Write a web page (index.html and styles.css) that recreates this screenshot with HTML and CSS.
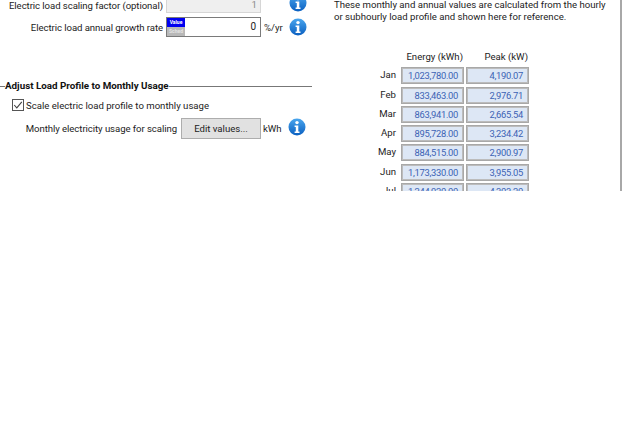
FILE: index.html
```html
<!DOCTYPE html>
<html lang="en">
<head>
<meta charset="utf-8">
<title>Electric Load</title>
<link rel="stylesheet" href="styles.css">
</head>
<body>
<main class="panel">
  <section class="left">
    <div class="row row-first">
      <label class="label">Electric load scaling factor (optional)</label>
      <div class="field field-disabled">1</div>
      <span class="unit"></span>
      <svg class="info" viewBox="0 0 18 18"><use href="#i"/></svg>
    </div>
    <div class="row row-second">
      <label class="label">Electric load annual growth rate</label>
      <div class="field field-switch">
        <div class="switch"><span class="sw-on">Value</span><span class="sw-off">Sched</span></div>
        <span class="field-value">0</span>
      </div>
      <span class="unit">%/yr</span>
      <svg class="info" viewBox="0 0 18 18"><use href="#i"/></svg>
    </div>
    <h2 class="group-title"><span>Adjust Load Profile to Monthly Usage</span></h2>
    <label class="check">
      <svg class="box" viewBox="0 0 12 12"><rect x=".5" y=".5" width="11" height="11" fill="#fff" stroke="#555"/><path d="M2.2 6 4.8 8.8 9.8 2.8" fill="none" stroke="#444" stroke-width="1.1"/></svg>
      Scale electric load profile to monthly usage
    </label>
    <div class="row row-usage">
      <label class="label label-usage">Monthly electricity usage for scaling</label>
      <button class="btn" type="button">Edit values...</button>
      <span class="unit">kWh</span>
      <svg class="info info-top" viewBox="0 0 18 18"><use href="#i"/></svg>
    </div>
  </section>
  <section class="right">
    <p class="note">These monthly and annual values are calculated from the hourly<br>or subhourly load profile and shown here for reference.</p>
    <div class="table">
      <span></span><span class="head">Energy (kWh)</span><span class="head">Peak (kW)</span>
      <span class="month">Jan</span><span class="cell">1,023,780.00</span><span class="cell">4,190.07</span>
      <span class="month">Feb</span><span class="cell">833,463.00</span><span class="cell">2,976.71</span>
      <span class="month">Mar</span><span class="cell">863,941.00</span><span class="cell">2,665.54</span>
      <span class="month">Apr</span><span class="cell">895,728.00</span><span class="cell">3,234.42</span>
      <span class="month">May</span><span class="cell">884,515.00</span><span class="cell">2,900.97</span>
      <span class="month">Jun</span><span class="cell">1,173,330.00</span><span class="cell">3,955.05</span>
      <span class="month">Jul</span><span class="cell">1,244,920.00</span><span class="cell">4,303.20</span>
    </div>
  </section>
</main>
<svg class="defs" width="0" height="0">
  <defs>
    <linearGradient id="g" x1="0" y1="0" x2="0" y2="1"><stop offset="0" stop-color="#4aa6ee"/><stop offset="1" stop-color="#0a5fc0"/></linearGradient>
    <g id="i">
      <circle cx="9" cy="9" r="8.5" fill="url(#g)"/>
      <circle cx="9" cy="4.6" r="1.7" fill="#fff"/>
      <path d="M6.6 7.4h3.7v6h1.2v1.5H6.6v-1.5h1.2V8.9H6.6z" fill="#fff"/>
    </g>
  </defs>
</svg>
</body>
</html>
```
FILE: styles.css
```css
* { box-sizing: border-box; }
html, body { margin: 0; padding: 0; background: #fff; }
body { font-family: Roboto, "Open Sans", sans-serif; font-size: 9.6px; color: #1c1c1c; }
.defs { display: block; }
.panel {
  width: 622px;
  height: 191px;
  display: flex;
  overflow: hidden;
  border-right: 2px solid #a8a8a8;
}
.left { width: 334px; flex: none; }
.row { display: flex; align-items: center; }
.row-first { height: 21px; margin-top: -8px; }
.row-first .label { padding-top: 6px; }
.row-second { height: 20px; margin-top: 4px; }
.label { width: 163px; text-align: right; flex: none; white-space: nowrap; letter-spacing: -0.07px; }
.field {
  width: 95px;
  height: 100%;
  margin-left: 3px;
  flex: none;
  border: 1px solid #7a7a7a;
  text-align: right;
}
.field-disabled {
  background: #efefef;
  border-color: #d6d6d6;
  color: #8a8a8a;
  padding: 5px 3px 0 0;
  line-height: 14px;
}
.field-switch { display: flex; background: #fff; }
.switch { width: 18px; flex: none; display: flex; flex-direction: column; font-size: 5px; font-weight: 700; line-height: 9px; text-align: center; }
.sw-on { background: #0000f0; color: #fff; height: 9px; }
.sw-off { background: #b8b8b8; color: #e4e4e4; flex: 1; }
.field-value { flex: 1; padding: 1px 4px 0 0; line-height: 15px; font-size: 10px; }
.unit { width: 28px; flex: none; padding-left: 3px; }
.info { width: 18px; height: 18px; flex: none; }
.info-top { align-self: flex-start; }
.group-title {
  display: flex;
  align-items: center;
  width: 312px;
  margin: 42px 0 0;
  font-size: 9.8px;
  line-height: 14px;
  font-weight: 700;
  color: #111;
}
.group-title::before { content: ""; width: 5px; height: 1px; background: #777; }
.group-title::after { content: ""; flex: 1; height: 1px; background: #777; }
.check {
  display: flex;
  align-items: center;
  gap: 2px;
  margin: 5px 0 0 12px;
  height: 14px;
}
.box { width: 12px; height: 12px; flex: none; }
.row-usage { height: 21px; margin-top: 6px; }
.label-usage { width: 177px; }
.btn {
  width: 80px;
  height: 21px;
  margin-left: 4px;
  flex: none;
  padding: 0;
  background: #e1e1e1;
  border: 1px solid #adadad;
  font: inherit;
  color: #1c1c1c;
}
.row-usage .unit { padding-left: 2px; width: 27px; }
.right { flex: 1; white-space: nowrap; }
.note { margin: -1px 0 0; line-height: 12px; color: #1c1c1c; }
.table {
  display: grid;
  grid-template-columns: 62px 63px 63px;
  grid-template-rows: 16px;
  grid-auto-rows: 17px;
  column-gap: 2px;
  row-gap: 2.3px;
  margin: 26px 0 0 3px;
}
.head { text-align: right; line-height: 15px; padding-right: 1px; }
.month { text-align: right; padding-right: 3px; line-height: 16px; }
.cell {
  border: 1px solid #a8a8a8;
  outline: 1px solid #bcbcbc;
  outline-offset: -2px;
  background: #dde7f5;
  color: #3b62b4;
  font-size: 9.4px;
  letter-spacing: -0.3px;
  text-align: right;
  padding-right: 5px;
  line-height: 16px;
}
```
